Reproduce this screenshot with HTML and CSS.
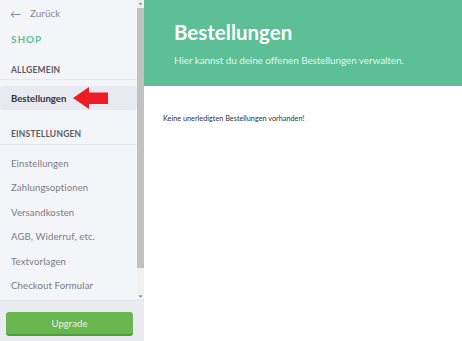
FILE: index.html
```html
<!DOCTYPE html>
<html lang="de">
<head>
<meta charset="utf-8">
<link rel="stylesheet" href="styles.css">
</head>
<body>
<div class="app">
  <aside class="sidebar">
    <div class="scrollarea">
      <nav class="nav">
        <a class="back"><span class="back-arrow">←</span>Zurück</a>
        <div class="shop">SHOP</div>
        <div class="section">ALLGEMEIN</div>
        <div class="item active">Bestellungen
          <svg class="pointer" width="36" height="24" viewBox="0 0 36 24"><polygon points="0,12 16,1 16,6.5 35,6.5 35,18 16,18 16,23" fill="#ee1c25"/></svg>
        </div>
        <div class="section second">EINSTELLUNGEN</div>
        <div class="item">Einstellungen</div>
        <div class="item">Zahlungsoptionen</div>
        <div class="item">Versandkosten</div>
        <div class="item">AGB, Widerruf, etc.</div>
        <div class="item">Textvorlagen</div>
        <div class="item">Checkout Formular</div>
      </nav>
      <div class="scrollbar">
        <div class="sb-btn"><svg width="7" height="7" viewBox="0 0 7 7"><polygon points="1.5,4.5 3.5,2.5 5.5,4.5" fill="#777"/></svg></div>
        <div class="sb-track"><div class="sb-thumb"></div></div>
        <div class="sb-btn"><svg width="7" height="7" viewBox="0 0 7 7"><polygon points="1.5,2.5 3.5,4.5 5.5,2.5" fill="#777"/></svg></div>
      </div>
    </div>
    <div class="footer">
      <button class="upgrade">Upgrade</button>
    </div>
  </aside>
  <main class="main">
    <header class="hero">
      <h1>Bestellungen</h1>
      <p>Hier kannst du deine offenen Bestellungen verwalten.</p>
    </header>
    <div class="content">Keine unerledigten Bestellungen vorhanden!</div>
  </main>
</div>
</body>
</html>
```
FILE: styles.css
```css
html, body {
  margin: 0;
  padding: 0;
  width: 462px;
  height: 341px;
  overflow: hidden;
  font-family: Lato, "Open Sans", sans-serif;
}
.app {
  display: flex;
  width: 462px;
  height: 341px;
}
.sidebar {
  width: 144px;
  flex: none;
  display: flex;
  flex-direction: column;
  background: #f4f5f9;
}
.scrollarea {
  height: 301px;
  display: flex;
  border-bottom: 1px solid #e4e5ec;
  box-sizing: border-box;
}
.nav {
  flex: 1;
  display: flex;
  flex-direction: column;
  overflow: hidden;
}
.back {
  display: flex;
  align-items: center;
  height: 26px;
  padding-left: 10px;
  font-size: 10px;
  color: #8a8b92;
}
.back-arrow {
  width: 20px;
  font-size: 11px;
}
.shop {
  padding: 7px 11px 0;
  height: 20px;
  font-size: 10px;
  font-weight: 700;
  letter-spacing: 0.9px;
  color: #5cbf96;
}
.section {
  padding: 9px 11px 0;
  height: 24px;
  box-sizing: border-box;
  font-size: 8.5px;
  font-weight: 700;
  color: #5a5b62;
  letter-spacing: 0.2px;
  border-bottom: 1px solid #e6e7ee;
  margin-top: 3px;
}
.section.second {
  margin-top: 10px;
  height: 25px;
  margin-bottom: 6px;
}
.item {
  position: relative;
  display: flex;
  align-items: center;
  height: 24.5px;
  flex: none;
  padding-left: 11px;
  font-size: 9.6px;
  letter-spacing: 0.1px;
  color: #7b7c83;
}
.item.active {
  margin-top: 6px;
  background: #e8e9f1;
  border-radius: 3px;
  font-weight: 700;
  color: #34353a;
  height: 24px;
  letter-spacing: 0;
}
.pointer {
  position: absolute;
  left: 73px;
  top: 0;
}
.scrollbar {
  width: 7px;
  flex: none;
  display: flex;
  flex-direction: column;
  background: #f1f1f1;
}
.sb-btn {
  height: 7px;
  display: flex;
}
.sb-track {
  flex: 1;
  display: flex;
  flex-direction: column;
}
.sb-thumb {
  height: 260px;
  margin-top: 1px;
  background: #c1c1c1;
}
.footer {
  flex: 1;
  background: #ebebf2;
  padding: 11px 6px 0 6px;
  display: flex;
  flex-direction: column;
  box-sizing: border-box;
  border-right: 7px solid #ebebf2;
}
.upgrade {
  height: 24px;
  width: 127px;
  border: none;
  border-bottom: 2px solid #4e9e3a;
  border-radius: 3px;
  background: #68b64e;
  color: #e9f6e3;
  font-family: Lato, "Open Sans", sans-serif;
  font-size: 9.6px;
  padding: 0;
}
.main {
  flex: 1;
  display: flex;
  flex-direction: column;
  background: #fff;
}
.hero {
  height: 86px;
  background: #5cbf96;
  padding: 19px 0 0 30px;
  box-sizing: border-box;
  color: #fff;
}
.hero h1 {
  margin: 0;
  font-size: 20.5px;
  font-weight: 700;
  line-height: 26px;
}
.hero p {
  margin: 9px 0 0;
  font-size: 10px;
  color: #e2f4ec;
  letter-spacing: -0.1px;
}
.content {
  padding: 28px 0 0 19px;
  font-size: 7.3px;
  color: #333;
}
```
